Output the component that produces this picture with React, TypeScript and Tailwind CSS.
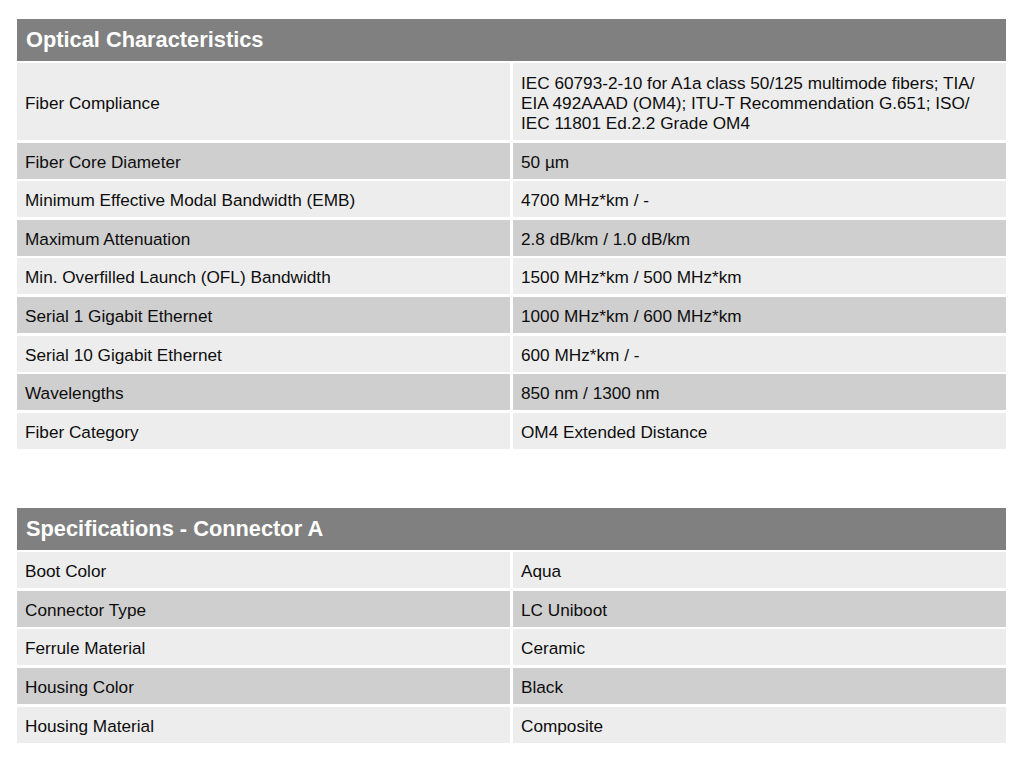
import React from 'react';

type Row = { label: string; value: React.ReactNode; tall?: boolean };

const optical: Row[] = [
    {
        label: 'Fiber Compliance',
        value: (
            <>
                IEC 60793-2-10 for A1a class 50/125 multimode fibers; TIA/
                <br />
                EIA 492AAAD (OM4); ITU-T Recommendation G.651; ISO/
                <br />
                IEC 11801 Ed.2.2 Grade OM4
            </>
        ),
        tall: true,
    },
    { label: 'Fiber Core Diameter', value: '50 µm' },
    { label: 'Minimum Effective Modal Bandwidth (EMB)', value: '4700 MHz*km / -' },
    { label: 'Maximum Attenuation', value: '2.8 dB/km / 1.0 dB/km' },
    { label: 'Min. Overfilled Launch (OFL) Bandwidth', value: '1500 MHz*km / 500 MHz*km' },
    { label: 'Serial 1 Gigabit Ethernet', value: '1000 MHz*km / 600 MHz*km' },
    { label: 'Serial 10 Gigabit Ethernet', value: '600 MHz*km / -' },
    { label: 'Wavelengths', value: '850 nm / 1300 nm' },
    { label: 'Fiber Category', value: 'OM4 Extended Distance' },
];

const connectorA: Row[] = [
    { label: 'Boot Color', value: 'Aqua' },
    { label: 'Connector Type', value: 'LC Uniboot' },
    { label: 'Ferrule Material', value: 'Ceramic' },
    { label: 'Housing Color', value: 'Black' },
    { label: 'Housing Material', value: 'Composite' },
];

function SpecTable({ title, rows, gap }: { title: string; rows: Row[]; gap: string }) {
    return (
        <div className="flex flex-col gap-[2px]">
            {/* Title bar */}
            <div className="h-[42px] bg-[#808080] flex items-center px-[9px]">
                <h2 className="text-[21.8px] font-bold text-white leading-none">{title}</h2>
            </div>

            <div className={`flex flex-col ${gap}`}>
                {rows.map((row, i) => {
                    const bg = i % 2 === 0 ? 'bg-[#ededed]' : 'bg-[#d0cfcf]';
                    const h = row.tall ? 'h-[77px]' : 'h-[36px]';
                    return (
                        <div key={row.label} className="grid grid-cols-2 gap-[3px] leading-[20px]">
                            <div className={`${bg} ${h} flex items-center px-[8px] pt-[2px]`}>
                                <span>{row.label}</span>
                            </div>
                            <div className={`${bg} ${h} flex items-center px-[8px] pt-[2px]`}>
                                <span>{row.value}</span>
                            </div>
                        </div>
                    );
                })}
            </div>
        </div>
    );
}

export default function App() {
    return (
        <div className="w-[1021px] h-[765px] bg-white pt-[19px] pl-[17px] pr-[15px] text-[17.2px] text-[#0d0d0d] font-['Liberation_Sans',Arial,sans-serif]">
            <div className="flex flex-col gap-[59px]">
                <SpecTable title="Optical Characteristics" rows={optical} gap="gap-[2.6px]" />
                <SpecTable title="Specifications - Connector A" rows={connectorA} gap="gap-[2.75px]" />
            </div>
        </div>
    );
}
